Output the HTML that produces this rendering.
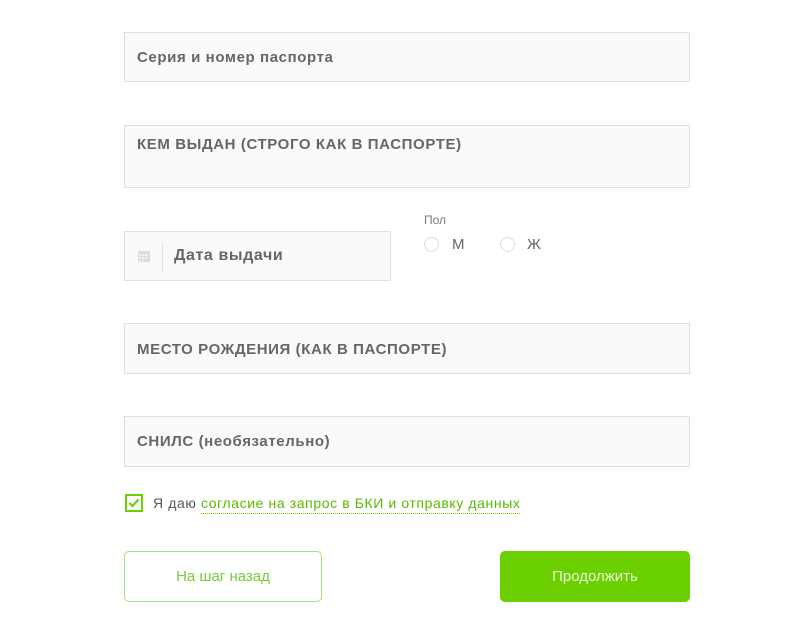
<!DOCTYPE html>
<html><head><meta charset="utf-8"><style>
body{margin:0;width:800px;height:642px;background:#fff;font-family:"Liberation Sans","DejaVu Sans",sans-serif;position:relative;overflow:hidden}
.f{position:absolute;left:124px;width:566px;border:1px solid #e0e0e0;background:#fafafa;box-sizing:border-box;color:#666;font-weight:bold;font-size:15px;letter-spacing:0.6px}
.f span{position:absolute;left:12px}
.abs{position:absolute}
.r{position:absolute;width:15px;height:15px;border:1px solid #ddd;border-radius:50%;box-sizing:border-box}
</style></head><body>
<div class="f" style="top:32px;height:50px"><span style="top:16px">Серия и номер паспорта</span></div>
<div class="f" style="top:125px;height:63px"><span style="top:10px">КЕМ ВЫДАН (СТРОГО КАК В ПАСПОРТЕ)</span></div>
<div class="f" style="top:231px;width:267px;height:50px">
<svg class="abs" style="left:12px;top:17px" width="14" height="14" viewBox="0 0 14 14"><rect x="1" y="2" width="12" height="11" fill="#ddd"/><g fill="#f4f4f4"><rect x="2" y="5" width="2" height="2"/><rect x="5" y="5" width="2" height="2"/><rect x="8" y="5" width="2" height="2"/><rect x="2" y="8" width="2" height="2"/><rect x="5" y="8" width="2" height="2"/><rect x="8" y="8" width="2" height="2"/><rect x="2" y="11" width="2" height="1"/><rect x="5" y="11" width="2" height="1"/></g></svg>
<div class="abs" style="left:37px;top:10px;width:1px;height:30px;background:#e3e3e3"></div>
<span style="left:49px;top:15px;font-size:16px">Дата выдачи</span></div>
<div class="abs" style="left:424px;top:213px;font-size:12px;color:#777">Пол</div>
<div class="r" style="left:424px;top:237px"></div><div class="abs" style="left:452px;top:236px;font-size:15px;color:#666">М</div>
<div class="r" style="left:500px;top:237px"></div><div class="abs" style="left:527px;top:236px;font-size:15px;color:#666">Ж</div>
<div class="f" style="top:323px;height:51px"><span style="top:17px">МЕСТО РОЖДЕНИЯ (КАК В ПАСПОРТЕ)</span></div>
<div class="f" style="top:416px;height:51px"><span style="top:16px">СНИЛС (необязательно)</span></div>
<div class="abs" style="left:125px;top:494px;width:18px;height:18px;border:2px solid #6bcf00;box-sizing:border-box"><svg width="14" height="14" viewBox="0 0 14 14" style="position:absolute;left:0;top:0"><path d="M2.5 7 L5.5 10 L11.5 3.5" stroke="#6bcf00" stroke-width="2.2" fill="none"/></svg></div>
<div class="abs" style="left:153px;top:495px;font-size:14px;color:#555;letter-spacing:0.6px">Я даю <span style="color:#5cb800;border-bottom:1px dotted #6bcf00;padding-bottom:2px">согласие на запрос в БКИ и отправку данных</span></div>
<div class="abs" style="left:124px;top:551px;width:198px;height:51px;border:1px solid #a8e07a;border-radius:5px;box-sizing:border-box;color:#7acb3c;font-size:15px;text-align:center;line-height:49px">На шаг назад</div>
<div class="abs" style="left:500px;top:551px;width:190px;height:51px;background:#6bcf00;border-radius:5px;color:#e8f8d8;font-size:15px;text-align:center;line-height:51px">Продолжить</div>
</body></html>
